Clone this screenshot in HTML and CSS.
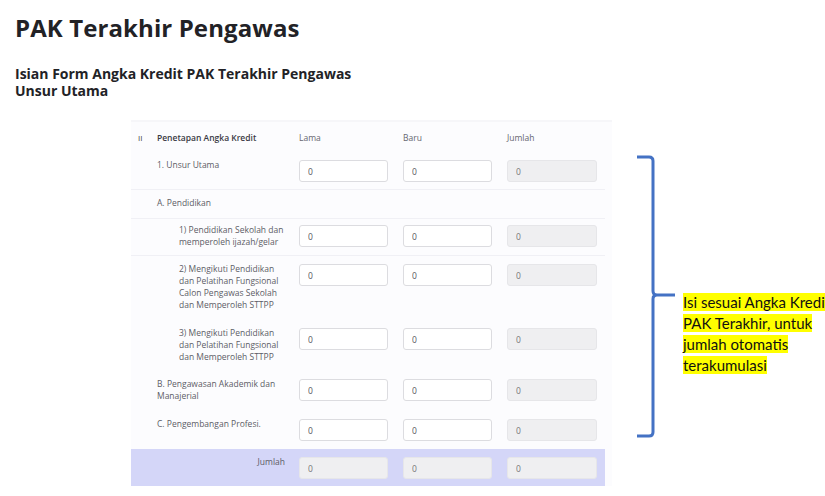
FILE: index.html
```html
<!DOCTYPE html>
<html lang="id">
<head>
<meta charset="utf-8">
<title>PAK Terakhir Pengawas</title>
<link rel="stylesheet" href="styles.css">
</head>
<body>
<div class="page">
  <h1 class="title">PAK Terakhir Pengawas</h1>
  <h2 class="subtitle"><span class="line">Isian Form Angka Kredit PAK Terakhir Pengawas</span><span class="line">Unsur Utama</span></h2>

  <div class="stage">
    <div class="panel">
      <div class="table">
        <div class="row head">
          <div class="num">II</div>
          <div class="label strong">Penetapan Angka Kredit</div>
          <div class="colhead">Lama</div>
          <div class="colhead">Baru</div>
          <div class="colhead">Jumlah</div>
        </div>

        <div class="row r1">
          <div class="num"></div>
          <div class="label">1. Unsur Utama</div>
          <div class="cell"><input class="field" value="0"></div>
          <div class="cell"><input class="field" value="0"></div>
          <div class="cell"><input class="field off" value="0" disabled></div>
        </div>

        <div class="row ra sep">
          <div class="num"></div>
          <div class="label">A. Pendidikan</div>
        </div>

        <div class="row r2 sep">
          <div class="num"></div>
          <div class="label sub">1) Pendidikan Sekolah dan<br>memperoleh ijazah/gelar</div>
          <div class="cell"><input class="field" value="0"></div>
          <div class="cell"><input class="field" value="0"></div>
          <div class="cell"><input class="field off" value="0" disabled></div>
        </div>

        <div class="row r3 sep">
          <div class="num"></div>
          <div class="label sub">2) Mengikuti Pendidikan<br>dan Pelatihan Fungsional<br>Calon Pengawas Sekolah<br>dan Memperoleh STTPP</div>
          <div class="cell"><input class="field" value="0"></div>
          <div class="cell"><input class="field" value="0"></div>
          <div class="cell"><input class="field off" value="0" disabled></div>
        </div>

        <div class="row r4">
          <div class="num"></div>
          <div class="label sub">3) Mengikuti Pendidikan<br>dan Pelatihan Fungsional<br>dan Memperoleh STTPP</div>
          <div class="cell"><input class="field" value="0"></div>
          <div class="cell"><input class="field" value="0"></div>
          <div class="cell"><input class="field off" value="0" disabled></div>
        </div>

        <div class="row r5">
          <div class="num"></div>
          <div class="label">B. Pengawasan Akademik dan<br>Manajerial</div>
          <div class="cell"><input class="field" value="0"></div>
          <div class="cell"><input class="field" value="0"></div>
          <div class="cell"><input class="field off" value="0" disabled></div>
        </div>

        <div class="row r6">
          <div class="num"></div>
          <div class="label">C. Pengembangan Profesi.</div>
          <div class="cell"><input class="field" value="0"></div>
          <div class="cell"><input class="field" value="0"></div>
          <div class="cell"><input class="field off" value="0" disabled></div>
        </div>

        <div class="row total">
          <div class="num"></div>
          <div class="label right">Jumlah</div>
          <div class="cell"><input class="field off" value="0" disabled></div>
          <div class="cell"><input class="field off" value="0" disabled></div>
          <div class="cell"><input class="field off" value="0" disabled></div>
        </div>
      </div>
    </div>

    <div class="annot">
      <svg class="brace" width="44" height="290" viewBox="0 0 44 290" aria-hidden="true">
        <path d="M2 3 H14 Q18 3 18 7 V137 Q18 141 22 141 H40 M18 145 Q18 141 22 141 M18 145 V278 Q18 282 14 282 H2" fill="none" stroke="#4472c4" stroke-width="3"/>
      </svg>
      <p class="note"><span class="hl">Isi sesuai Angka Kredit</span><br><span class="hl">PAK Terakhir, untuk</span><br><span class="hl">jumlah otomatis</span><br><span class="hl">terakumulasi</span></p>
    </div>
  </div>
</div>
</body>
</html>
```

FILE: styles.css
```css
* { box-sizing: border-box; }
html, body { margin: 0; padding: 0; background: #ffffff; overflow: hidden; }
body { width: 825px; height: 496px; }
.page { padding: 13px 0 0 15px; }
.title {
  margin: 0;
  font-family: "Open Sans", "DejaVu Sans", sans-serif;
  font-weight: 700;
  font-size: 24px;
  line-height: 30px;
  color: #222226;
  letter-spacing: 0.1px;
}
.subtitle {
  margin: 22px 0 0 0;
  font-family: "Open Sans", "DejaVu Sans", sans-serif;
  font-weight: 700;
  font-size: 14px;
  line-height: 17px;
  color: #222226;
}
.subtitle .line { display: block; height: 17px; }
.stage {
  display: flex;
  align-items: flex-start;
  margin: 21px 0 0 116px;
}
.panel {
  flex: none;
  width: 481px;
  background: #fcfcfe;
  border-top: 2px solid #f6f6f9;
}
.table { width: 474px; font-family: "Open Sans", "Noto Sans", sans-serif; font-size: 8.5px; color: #5c5c66; }
.row {
  display: grid;
  grid-template-columns: 19px 142px 104px 104px 90px;
  align-items: start;
  padding: 8px 0 7px 7px;
}
.row.sep { border-top: 1px solid #f0f0f5; }
.head { padding-top: 10px; padding-bottom: 8px; }
.ra { padding-bottom: 9px; }
.r2 { padding-top: 6px; }
.r3 { padding-top: 8px; }
.r4 { padding-top: 10px; padding-bottom: 8px; }
.r5 { padding-top: 8px; padding-bottom: 9px; }
.r6 { padding-top: 8px; padding-bottom: 8px; }
.total { background: #d4d6f8; padding-top: 8px; padding-bottom: 7px; }
.num { font-size: 8px; line-height: 12px; color: #444; }
.label { line-height: 12px; margin-top: -1px; white-space: nowrap; }
.label.sub { padding-left: 22px; }
.label.strong { color: #3a3a44; font-weight: 600; margin-top: 0; }
.label.right { text-align: right; padding-right: 14px; }
.colhead { line-height: 12px; color: #666670; }
.field {
  display: block;
  width: 89px;
  height: 22px;
  margin: 0;
  padding: 0 0 0 8px;
  border: 1px solid #dcdce0;
  border-radius: 3px;
  background: #ffffff;
  font-family: "Open Sans", "Noto Sans", sans-serif;
  font-size: 8.5px;
  color: #55555c;
  outline: none;
}
.field.off { background: #efeff1; border-color: #e6e6e9; color: #777; width: 90px; }
.cell:nth-child(3) .field, .cell:nth-child(4) .field { width: 89px; }
.annot {
  flex: none;
  display: flex;
  align-items: flex-start;
  margin: 34px 0 0 23px;
}
.brace { display: block; flex: none; }
.note {
  flex: none;
  margin: 138px 0 0 4px;
  font-family: "Lato", "Open Sans", sans-serif;
  font-size: 15px;
  line-height: 21px;
  color: #111;
  white-space: nowrap;
}
.hl { background: #ffff00; }
```
